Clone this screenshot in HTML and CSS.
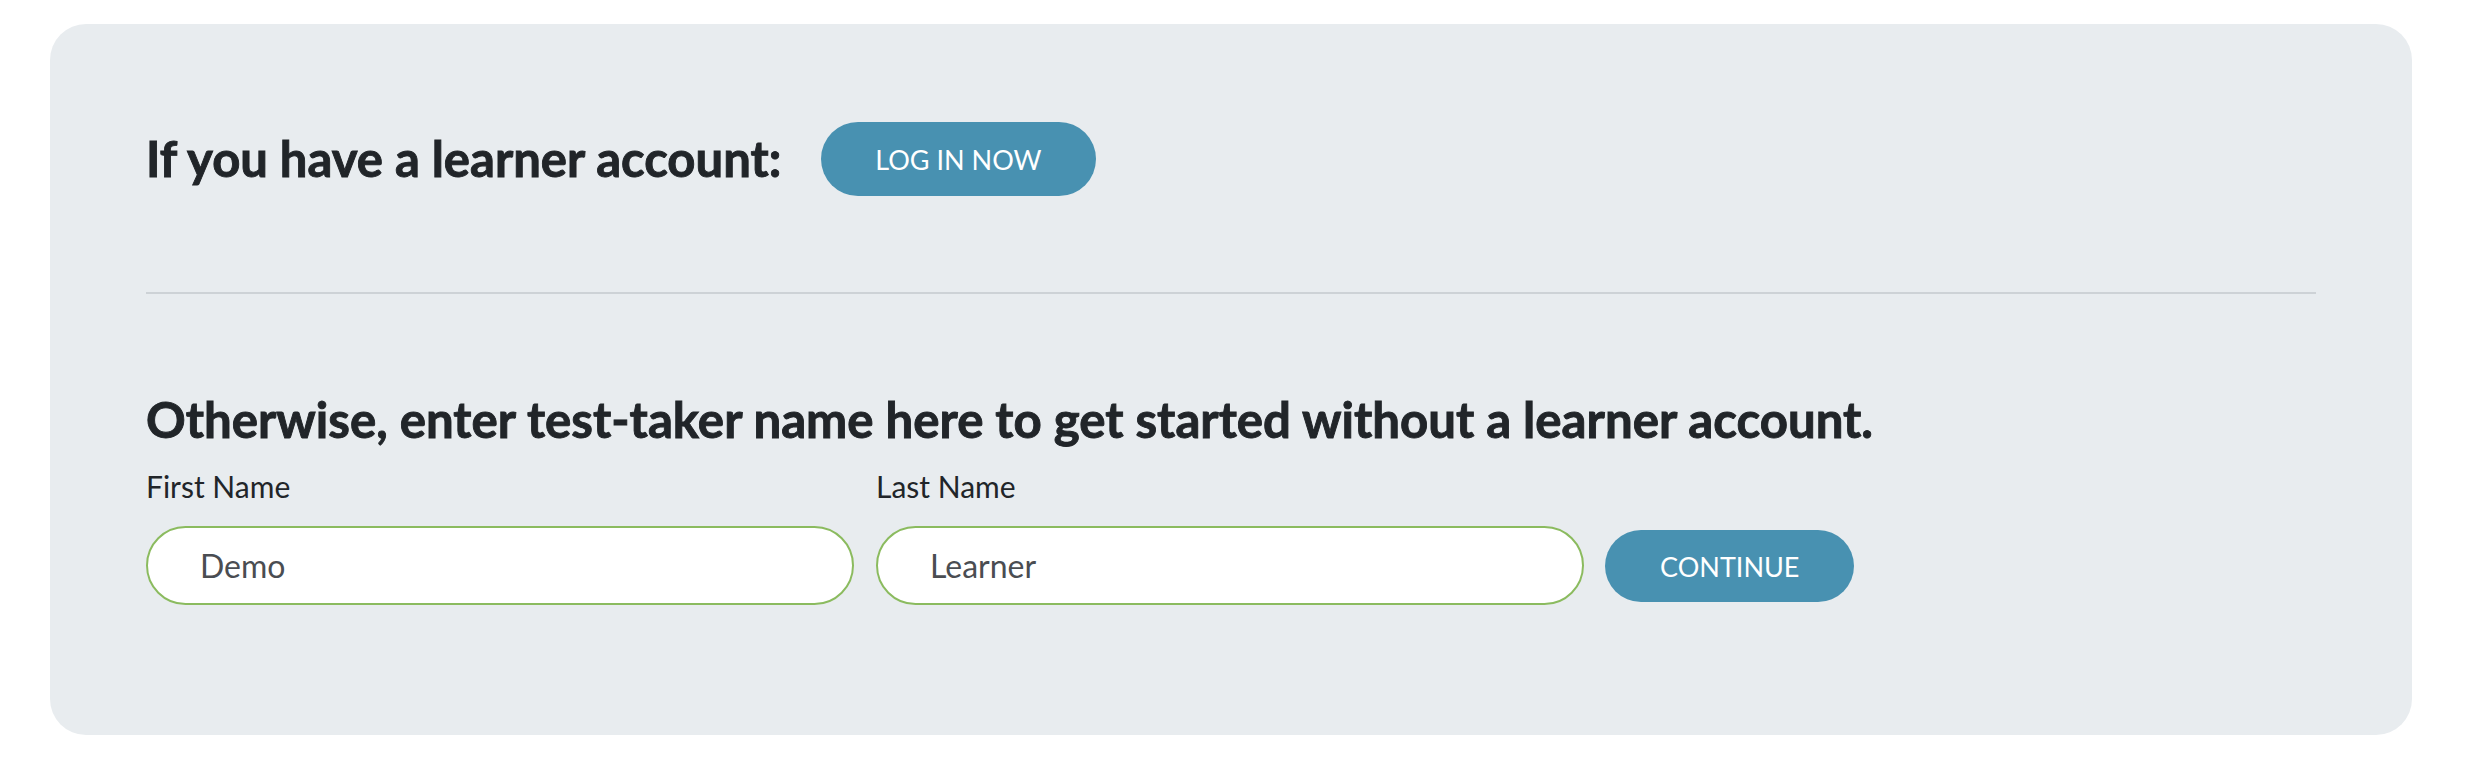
FILE: index.html
```html
<!DOCTYPE html>
<html lang="en">
<head>
  <meta charset="UTF-8">
  <title>Get started</title>
  <link rel="stylesheet" href="styles.css">
</head>
<body>

<div class="panel">
  <!-- Learner account -->
  <div class="login-row">
    <h2>If you have a learner account:</h2>
    <button class="btn">LOG IN NOW</button>
  </div>

  <hr class="divider">

  <!-- Guest -->
  <h2 class="guest-title">Otherwise, enter test-taker name here to get started without a learner account.</h2>
  <div class="name-form">
    <div class="field">
      <label for="firstName">First Name</label>
      <input type="text" id="firstName" value="Demo">
    </div>
    <div class="field">
      <label for="lastName">Last Name</label>
      <input type="text" id="lastName" value="Learner">
    </div>
    <button class="btn btn-continue">CONTINUE</button>
  </div>
</div>

</body>
</html>
```

FILE: styles.css
```css
body {
  margin: 0;
  padding: 24px 58px 38px 50px;
  font-family: Lato, "Open Sans", sans-serif;
  color: #212529;
  background-color: #fff;
}

.panel {
  background-color: #e8ecef;
  border-radius: 36px;
  padding: 98px 96px 130px 96px;
}

h2 {
  margin: 0;
  font-size: 49px;
  font-weight: 700;
  line-height: 1.18;
  -webkit-text-stroke: 0.9px #212529; /* heavier look, like the original */
}

.login-row {
  display: flex;
  align-items: center;
  gap: 40px;
}

.btn {
  font-family: Lato, "Open Sans", sans-serif;
  font-size: 27px;
  color: #fff;
  background-color: #4891b1;
  border: none;
  border-radius: 37px;
  height: 74px;
  padding: 0 54px;
  cursor: pointer;
}

.divider {
  border: none;
  border-top: 2px solid #cdd2d6;
  margin: 96px 0 0 0;
}

.guest-title {
  margin-top: 96px;
  font-size: 49.2px;
}

.name-form {
  display: flex;
  align-items: flex-end;
  gap: 22px;
  margin-top: 20px;
}

.field {
  display: flex;
  flex-direction: column;
  width: 708px;
}

.field label {
  font-size: 30px;
  margin-bottom: 22px;
}

.field input {
  font-family: Lato, "Open Sans", sans-serif;
  font-size: 32px;
  color: #4a4d52;
  height: 79px;
  box-sizing: border-box;
  border: 2px solid #8bbb5f;
  border-radius: 40px;
  padding: 0 52px;
  background-color: #fff;
  outline: none;
}

.btn-continue {
  height: 72px;
  padding: 0 55px;
  margin-bottom: 3px;
  margin-left: -1px;
}
```
